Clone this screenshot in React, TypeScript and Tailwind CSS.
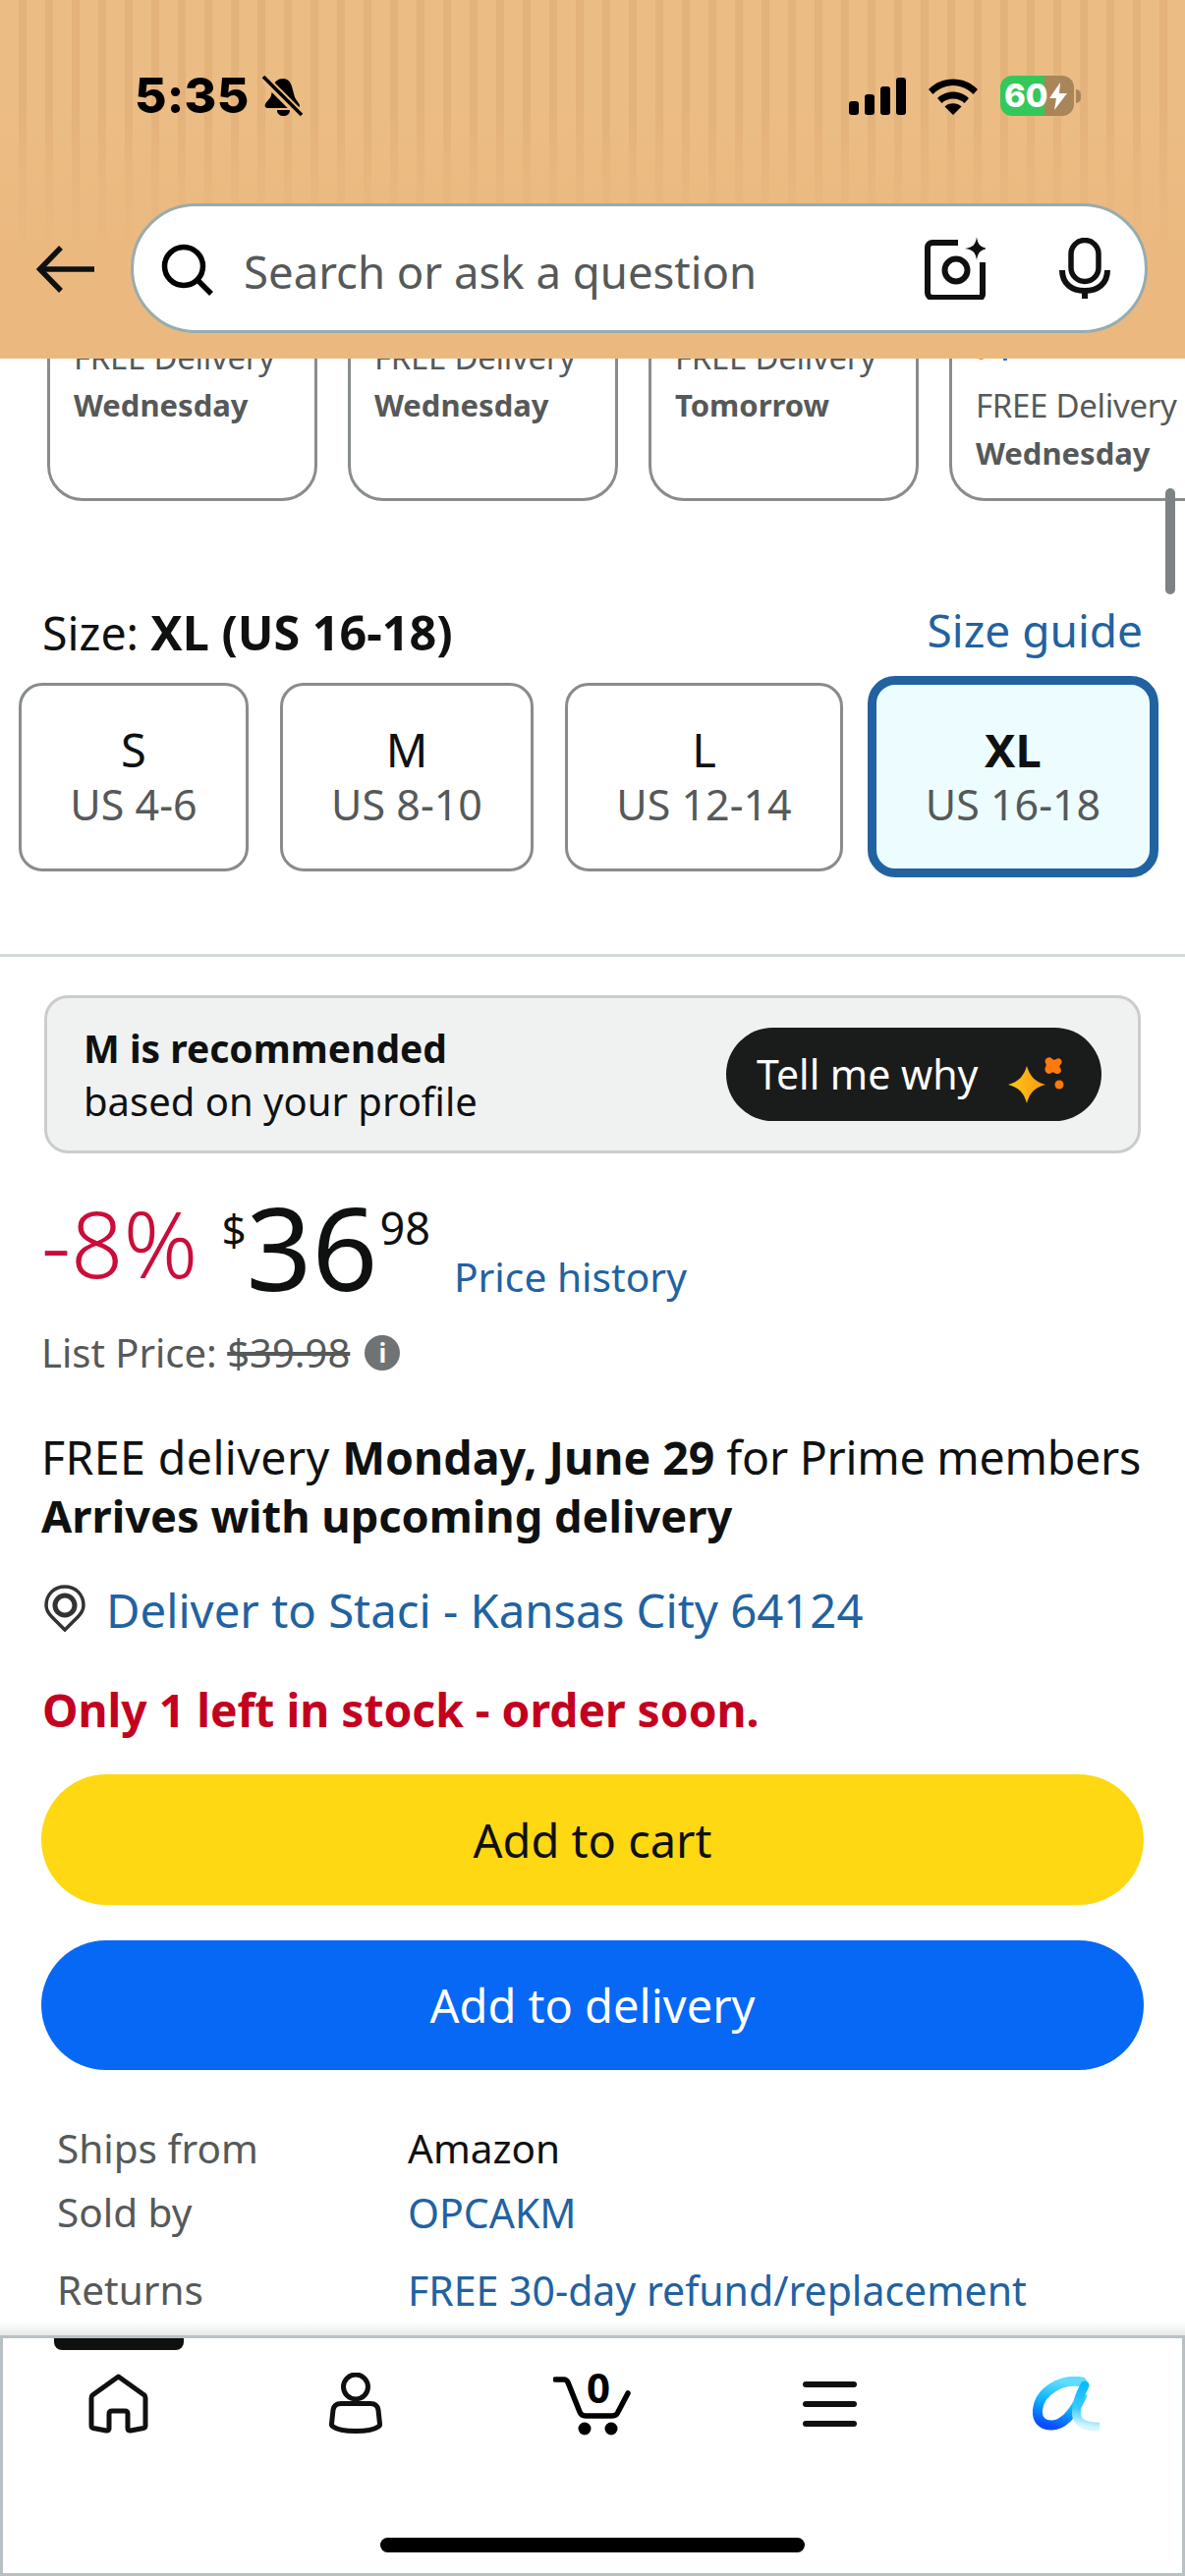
import React from "react";

const SizeBtn = ({ a, b, w, selected }: { a: string; b: string; w: string; selected?: boolean }) => (
  <div
    className={
      selected
        ? `${w} h-[205px] ml-[-7px] flex flex-col items-center justify-center rounded-[28px] border-[9px] border-[#2162a1] bg-[#edfdff]`
        : `${w} h-[192px] flex flex-col items-center justify-center rounded-[24px] border-[3px] border-[#888c8c] bg-white`
    }
  >
    <div className={`text-[47px] leading-[56px] text-[#0f1111] ${selected ? "font-bold" : ""}`}>{a}</div>
    <div className="text-[43px] leading-[56px] text-[#565959]">{b}</div>
  </div>
);

const Card = ({ a, b, four }: { a: string; b: string; four?: boolean }) => (
  <div className={`w-[275px] h-[220px] shrink-0 rounded-b-[36px] border-[3px] border-[#888c8c] bg-white flex flex-col justify-end pl-[24px] ${four ? "pb-[22px]" : "pb-[71px]"}`}>
    {four && (
      <div className="mb-[22px] ml-[2px] flex h-[8px] items-start gap-[19px]">
        <div className="h-[7px] w-[7px] rounded-b-full bg-[#ff7a0a]" />
        <div className="h-[8px] w-[4px] bg-[#0b7cf6]" />
      </div>
    )}
    <div className="text-[33px] leading-[48px] text-[#565959] whitespace-nowrap tracking-[-0.3px]">{a}</div>
    <div className="text-[31px] font-bold leading-[48px] text-[#565959] whitespace-nowrap">{b}</div>
  </div>
);

const InfoRow = ({ k, v, link, mt }: { k: string; v: string; link?: boolean; mt: string }) => (
  <div className={`flex h-[50px] items-center pl-[58px] ${mt}`}>
    <div className="w-[357px] text-[40.500px] leading-[50px] text-[#565959]">{k}</div>
    <div className={link ? "text-[41px] leading-[50px] text-[#2162a1]" : "text-[40.500px] leading-[50px] text-[#0f1111]"}>{v}</div>
  </div>
);

export default function App() {
  return (
    <div className="relative flex h-[2622px] w-[1206px] flex-col overflow-hidden bg-white font-['Noto_Sans','Liberation_Sans',sans-serif]">
      {/* header */}
      <header className="z-10 h-[365px] shrink-0 bg-[linear-gradient(180deg,#ebbb8300_0px,#ebbb8300_110px,#ebb980_260px),repeating-linear-gradient(90deg,#ebbc84_0px,#ebbc84_19px,#e4b27b_19px,#e4b27b_27px)] pt-[77px]">
        <div className="flex h-[41px] items-center pl-[137px] pr-[106px]">
          <span className="font-['Inter'] text-[50px] font-extrabold leading-[41px] tracking-[0.2px] text-black">5:35</span>
          <svg className="ml-[14px]" width="42" height="42" viewBox="0 0 42 42">
            <path d="M21 3c4 0 7 2 9 8l3 11c1 3 4 5 5 8 0 2-1 3-3 3H6c-3 0-4-2-3-4 1-3 5-5 6-9l2-9c1-5 5-8 10-8z" fill="#000" />
            <path d="M15 35h13c0 4-3 6-6.500 6S15 39 15 35z" fill="#000" />
            <path d="M2 3l37 37" stroke="#ebbb83" strokeWidth="9" />
            <path d="M1 1l39 39" stroke="#000" strokeWidth="3.500" />
          </svg>
          <div className="flex-1" />
          <svg width="58" height="38" viewBox="0 0 58 38">
            <rect x="0" y="24" width="10" height="14" rx="3" fill="#000" />
            <rect x="16" y="17" width="10" height="21" rx="3" fill="#000" />
            <rect x="32" y="9" width="10" height="29" rx="3" fill="#000" />
            <rect x="48" y="0" width="10" height="38" rx="3" fill="#000" />
          </svg>
          <svg className="ml-[22px]" width="52" height="38" viewBox="0 0 52 38">
            <path d="M1 12C8 5 16 1.500 26 1.500S44 5 51 12l-4.500 5C41 11.500 34 8 26 8S11 11.500 5.500 17z" fill="#000" />
            <path d="M10 21c4-4 10-6.500 16-6.500S38 17 42 21l-4.500 5c-3-2.800-7-4.500-11.500-4.500S17.500 23.200 14.500 26z" fill="#000" />
            <path d="M17.500 29.500c2.300-2 5.300-3.200 8.500-3.200s6.200 1.200 8.500 3.200L26 38z" fill="#000" />
          </svg>
          <div className="ml-[22px] flex h-[41px] w-[75px] overflow-hidden rounded-[12px]">
            <div className="w-[45px] bg-[#34c85a]" />
            <div className="flex-1 bg-[#a9855a]" />
          </div>
          <div className="ml-[2px] h-[14px] w-[5px] rounded-r-full bg-[#a9855a]" />
        </div>
        <div className="absolute left-[1022px] top-[77px] flex h-[41px] items-center">
          <span className="font-['Inter'] text-[33px] font-extrabold leading-[41px] text-white">60</span>
          <svg className="ml-[1px]" width="18" height="28" viewBox="0 0 18 28"><path d="M11 0L0 16h7L5 28 18 11h-8z" fill="#fff" /></svg>
        </div>

        <div className="mt-[89px] flex items-center pl-[37px]">
          <svg className="mt-[2px]" width="60" height="48" viewBox="0 0 60 48" fill="none" stroke="#0f1111" strokeWidth="5.500">
            <path d="M59 24H4" />
            <path d="M25 2L3.500 24 25 46" />
          </svg>
          <div className="ml-[36px] flex h-[132px] w-[1035px] items-center rounded-[66px] border-[3px] border-[#96acb0] bg-white pl-[28px]">
            <svg className="mt-[6px]" width="56" height="56" viewBox="0 0 56 56" fill="none" stroke="#000" strokeWidth="5.500">
              <circle cx="23" cy="23" r="19.500" />
              <path d="M36 36l15 15" />
            </svg>
            <span className="ml-[28px] mt-[6px] text-[45.500px] leading-[60px] text-[#565959]">Search or ask a question</span>
            <div className="flex-1" />
            <svg width="64" height="64" viewBox="0 0 64 64" fill="none">
              <path d="M36 6H10a5 5 0 0 0-5 5v46a5 5 0 0 0 5 5h48a3 3 0 0 0 3-3V26" stroke="#0f1111" strokeWidth="6" />
              <circle cx="34" cy="34" r="11.500" stroke="#0f1111" strokeWidth="6" />
              <path d="M56 0c1 8 4 11 12 12-8 1-11 4-12 12-1-8-4-11-12-12 8-1 11-4 12-12z" fill="#0f1111" transform="translate(-1 0)" />
            </svg>
            <svg className="ml-[75px] mr-[35px]" width="52" height="62" viewBox="0 0 52 62" fill="none">
              <rect x="12" y="2.500" width="28" height="42" rx="14" stroke="#0f1111" strokeWidth="5.500" />
              <path d="M3 33c0 14 10 21 23 21s23-7 23-21" stroke="#0f1111" strokeWidth="6" />
              <path d="M26 52v10" stroke="#0f1111" strokeWidth="6" />
            </svg>
          </div>
        </div>
      </header>

      {/* main content */}
      <main className="relative h-[2012px] shrink-0 overflow-hidden">
        <div className="flex h-[145px] items-end gap-[31px] overflow-hidden pl-[48px]">
          <Card a="FREE Delivery" b="Wednesday" />
          <Card a="FREE Delivery" b="Wednesday" />
          <Card a="FREE Delivery" b="Tomorrow" />
          <Card a="FREE Delivery" b="Wednesday" four />
        </div>

        <div className="mt-[108px] flex h-[50px] items-center justify-between pl-[43px] pr-[43px] text-[#0f1111]">
          <div className="text-[46.500px] leading-[50px]">Size: <span className="text-[48.500px] font-bold">XL (US 16-18)</span></div>
          <div className="mb-[5px] text-[46px] leading-[50px] text-[#2162a1]">Size guide</div>
        </div>

        <div className="mt-[20px] flex h-[205px] items-center gap-[32px] pl-[19px]">
          <SizeBtn a="S" b="US 4-6" w="w-[234px]" />
          <SizeBtn a="M" b="US 8-10" w="w-[258px]" />
          <SizeBtn a="L" b="US 12-14" w="w-[283px]" />
          <SizeBtn a="XL" b="US 16-18" w="w-[296px]" selected />
        </div>

        <div className="mt-[78px] h-[3px] bg-[#d5d9d9]" />

        <div className="mx-[45px] mt-[39px] flex h-[161px] items-center justify-between rounded-[24px] border-[3px] border-[#cccccc] bg-[#f0f2f2] pl-[37px] pr-[37px]">
          <div className="text-[#0f1111]">
            <div className="text-[39px] font-bold leading-[54px]">M is recommended</div>
            <div className="text-[40px] leading-[54px]">based on your profile</div>
          </div>
          <div className="flex h-[95px] w-[382px] items-center rounded-full bg-[#1a1c1c] pl-[31px]">
            <span className="text-[41px] text-white">Tell me why</span>
            <svg className="ml-[31px] mt-[1px]" width="58" height="60" viewBox="0 0 58 60">
              <defs>
                <linearGradient id="spark" x1="0" x2="1" y1="0" y2="0">
                  <stop offset="0" stopColor="#ffc61a" />
                  <stop offset="1" stopColor="#fa9a10" />
                </linearGradient>
              </defs>
              <path d="M19 21c3 10 8 16 19 19-11 3-16 8-19 19-3-11-8-16-19-19 11-3 16-9 19-19z" fill="url(#spark)" />
              <path d="M38 8c-2-4 4-8 7-4 1 1 3 1 4 0 4-3 8 3 4 6-1 1-1 2 0 3 3 4-2 8-6 5-1-1-2-1-3 0-4 3-8-2-6-6 1-1 1-3 0-4z" fill="#ff7a0a" transform="translate(0 10)" />
              <circle cx="52" cy="40" r="4.500" fill="#ff7a0a" />
            </svg>
          </div>
        </div>

        {/* price */}
        <div className="mt-[36px] flex h-[112px] items-start pl-[42px] text-[#0f1111]">
          <div className="mt-[10px] text-[93.500px] font-light leading-[90px] text-[#cc0c39]">-8%</div>
          <div className="ml-[24px] mt-[16px] text-[44px] leading-[50px]">$</div>
          <div className="ml-0 mt-[-1px] text-[117px] leading-[120px]">36</div>
          <div className="ml-[2px] mt-[15px] text-[45px] leading-[50px]">98</div>
          <div className="ml-[24px] mt-[62px] text-[40.700px] leading-[54px] text-[#2162a1]">Price history</div>
        </div>

        <div className="mt-[30px] flex h-[50px] items-center pl-[42px] text-[40px] text-[#565959]">
          <span>List Price:&nbsp;</span>
          <span className="line-through">$39.98</span>
          <span className="ml-[15px] flex h-[36px] w-[36px] items-center justify-center rounded-full bg-[#6f7373] text-[26px] font-bold leading-none text-white">i</span>
        </div>

        <div className="mt-[51px] pl-[42px] text-[#0f1111]">
          <div className="text-[46.500px] leading-[60px]">
            <span className="tracking-[0.4px]">FREE delivery </span>
            <span className="font-bold">Monday, June 29</span>
            <span className="tracking-[-0.25px]"> for Prime members</span>
          </div>
          <div className="text-[45.200px] font-bold leading-[60px]">Arrives with upcoming delivery</div>
        </div>

        <div className="mt-[41px] flex h-[50px] items-center pl-[45px] text-[47.300px] text-[#2162a1]">
          <svg className="mb-[4px]" width="42" height="48" viewBox="0 0 42 48" fill="none">
            <path d="M21 46L8 33C4 29 2 25 2 21 2 10 10 2 21 2s19 8 19 19c0 4-2 8-6 12z" stroke="#333" strokeWidth="3.500" fill="#fff" />
            <circle cx="21" cy="21" r="10" stroke="#333" strokeWidth="5" />
          </svg>
          <span className="ml-[21px] leading-[50px]">Deliver to Staci - Kansas City 64124</span>
        </div>

        <div className="mt-[52px] flex h-[50px] items-center pl-[43px] text-[46.200px] font-bold text-[#c40020]">Only 1 left in stock - order soon.</div>

        <div className="mx-[42px] mt-[40px] flex h-[133px] items-center justify-center rounded-full bg-[#ffd814] text-[47px] leading-[60px] text-[#0f1111]">Add to cart</div>
        <div className="mx-[42px] mt-[36px] flex h-[132px] items-center justify-center rounded-full bg-[#0768f5] text-[47px] leading-[60px] text-white">Add to delivery</div>

        <InfoRow k="Ships from" v="Amazon" mt="mt-[55px]" />
        <InfoRow k="Sold by" v="OPCAKM" link mt="mt-[15px]" />
        <InfoRow k="Returns" v="FREE 30-day refund/replacement" link mt="mt-[29px]" />

        <div className="absolute bottom-0 left-0 h-[14px] w-full bg-gradient-to-b from-transparent to-[#e7e9e9]" />
        <div className="absolute right-[10px] top-[132px] h-[108px] w-[10px] rounded-full bg-[#7d8284]" />
      </main>

      {/* bottom nav */}
      <nav className="relative z-10 h-[245px] shrink-0 border-[3px] border-[#b9c0c3] bg-white">
        <div className="absolute left-[52px] top-0 h-[12px] w-[132px] rounded-b-[8px] bg-[#0f1111]" />
        <div className="mx-[-3px] grid grid-cols-5 pt-[32px]">
          <div className="flex h-[70px] items-center justify-center">
            <svg className="ml-[1px]" width="62" height="62" viewBox="0 0 62 62" fill="none" stroke="#0f1111" strokeWidth="5" strokeLinejoin="round">
              <path d="M30.500 3L4 22Q3 23 3 25V53Q3 55 5 55.500L18 58Q21 58.500 21 56V41Q21 38 24 38H37Q40 38 40 41V56Q40 58.500 43 58L56 55.500Q58 55 58 53V25Q58 23 57 22Z" />
            </svg>
          </div>
          <div className="flex h-[70px] items-center justify-center">
            <svg width="54" height="64" viewBox="0 0 54 64" fill="none" stroke="#0f1111" strokeWidth="5">
              <circle cx="27" cy="14.500" r="12.500" />
              <path d="M12 31.500H42Q49 31.500 50 38L51.500 52Q52 54 50 55C42 61 12 61 4 55Q2 54 2.500 52L4 38Q5 31.500 12 31.500Z" />
            </svg>
          </div>
          <div className="flex h-[70px] items-center justify-center">
            <svg width="80" height="68" viewBox="0 0 80 68" fill="none">
              <path d="M2 9h9c2 0 3 1 4 3l12 30c1 3 3 4 6 4h27c3 0 5-1 6-4l10-19" stroke="#000" strokeWidth="5.500" strokeLinecap="round" />
              <circle cx="32" cy="59" r="6.500" fill="#000" />
              <circle cx="59" cy="59" r="6.500" fill="#000" />
              <text x="46" y="33" textAnchor="middle" fontFamily="Noto Sans" fontWeight="700" fontSize="42" fill="#000">0</text>
            </svg>
          </div>
          <div className="flex h-[70px] items-center justify-center">
            <div className="flex w-[55px] flex-col gap-[14px]">
              <div className="h-[6px] rounded-full bg-[#0f1111]" />
              <div className="h-[6px] rounded-full bg-[#0f1111]" />
              <div className="h-[6px] rounded-full bg-[#0f1111]" />
            </div>
          </div>
          <div className="flex h-[70px] items-center justify-center">
            <svg width="68" height="56" viewBox="0 0 68 56" fill="none">
              <defs>
                <linearGradient id="a1" x1="0.5" x2="0.2" y1="0" y2="1">
                  <stop offset="0" stopColor="#5fdcff" />
                  <stop offset="0.5" stopColor="#0ab4ff" />
                  <stop offset="1" stopColor="#0a4dff" />
                </linearGradient>
                <linearGradient id="a2" x1="0.6" x2="0.5" y1="0" y2="1">
                  <stop offset="0" stopColor="#0abaff" />
                  <stop offset="0.6" stopColor="#3bc9ff" />
                  <stop offset="1" stopColor="#d8f6ff" />
                </linearGradient>
              </defs>
              <path d="M50 5.500C30 2 7 14 5 34c-1 12 7 16 15 15.500C32 49 42 36 50 20" stroke="url(#a1)" strokeWidth="10" strokeLinecap="round" />
              <path d="M53 9c-6 11-10 23-8 32 2 7 9 10 21 10" stroke="url(#a2)" strokeWidth="9" strokeLinecap="round" />
            </svg>
          </div>
        </div>
        <div className="absolute left-[384px] top-[203px] h-[15px] w-[432px] rounded-full bg-black" />
      </nav>
    </div>
  );
}
